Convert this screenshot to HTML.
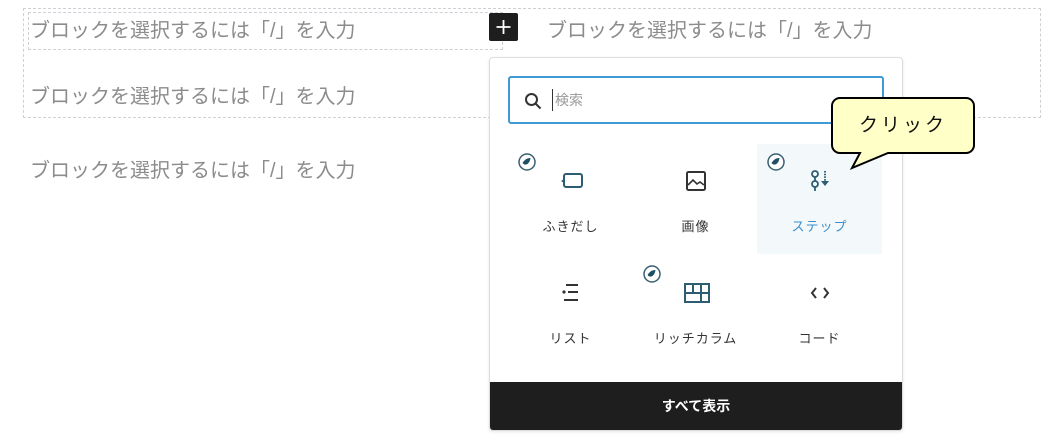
<!DOCTYPE html>
<html><head><meta charset="utf-8"><style>
*{box-sizing:border-box;margin:0;padding:0}
body{width:1054px;height:446px;background:#fff;position:relative;overflow:hidden;font-family:"Liberation Sans","Noto Sans CJK JP",sans-serif}
.ph{position:absolute;font-size:20px;color:#8c8c8c;line-height:24px;white-space:nowrap}
.dash{position:absolute;border:1px dashed #cfcfd6}
.plus{position:absolute;left:489px;top:13px;width:29px;height:28px;background:#1e1e1e;border-radius:2px}
.pop{position:absolute;left:489px;top:57px;width:414px;height:374px;border:1px solid #ddd;border-radius:4px;background:#fff;overflow:hidden;box-shadow:0 1px 3px rgba(0,0,0,.1)}
.search{position:absolute;left:18px;top:18px;width:376px;height:48px;border:2px solid #3f9ad6;border-radius:3px}
.cell{position:absolute;width:125px;height:110px;text-align:center}
.cell .lbl{position:absolute;left:0;right:0;top:72px;font-size:13px;color:#333;letter-spacing:1px}
.cell svg.ic{position:absolute;left:50px;top:24px}
.badge{position:absolute}
.foot{position:absolute;left:0;right:0;bottom:0;height:48px;background:#1e1e1e;color:#fff;text-align:center;line-height:48px;font-size:14px;font-weight:bold}
</style></head><body>
<div class="dash" style="left:23px;top:8px;width:1018px;height:110px"></div>
<div class="dash" style="left:28px;top:12px;width:475px;height:38px;background:#fff"></div>
<div class="ph" style="left:30px;top:19px">ブロックを選択するには「/」を入力</div>
<div class="ph" style="left:547px;top:19px">ブロックを選択するには「/」を入力</div>
<div class="ph" style="left:30px;top:85px">ブロックを選択するには「/」を入力</div>
<div class="ph" style="left:30px;top:159px">ブロックを選択するには「/」を入力</div>
<div class="plus"><svg width="29" height="28"><path d="M14.5 7v14M7.5 14h14" stroke="#fff" stroke-width="1.8"/></svg></div>
<div class="pop">
 <div class="search">
  <svg style="position:absolute;left:14px;top:14px" width="18" height="18"><circle cx="7.5" cy="7.5" r="5.5" fill="none" stroke="#333" stroke-width="2"/><path d="M11.5 11.5l5 5" stroke="#333" stroke-width="2"/></svg>
  <div style="position:absolute;left:42px;top:11px;width:1px;height:22px;background:#333"></div>
  <div style="position:absolute;left:45px;top:12px;font-size:14px;color:#999">検索</div>
 </div>
 <div class="cell" style="left:18px;top:86px">
  <svg class="badge" style="left:10px;top:9px" width="18" height="18"><circle cx="9" cy="9" r="8" fill="#fff" stroke="#3a5f72" stroke-width="1.5"/><path d="M4.5 10c2 3 7 2 8-5c-4 0-6 2-8 5z" fill="#1f4f66"/></svg>
  <svg class="ic" width="26" height="26"><rect x="6" y="6" width="18" height="13" rx="2" fill="none" stroke="#2c5d73" stroke-width="2"/><path d="M6 11l-3 2 3 2z" fill="#2c5d73"/></svg>
  <div class="lbl">ふきだし</div></div>
 <div class="cell" style="left:143px;top:86px">
  <svg class="ic" width="26" height="26"><rect x="4" y="4" width="18" height="18" rx="1.5" fill="none" stroke="#333" stroke-width="2"/><path d="M5 17l5-5 4 4 3-2 4 3" fill="none" stroke="#333" stroke-width="1.6"/></svg>
  <div class="lbl">画像</div></div>
 <div class="cell" style="left:267px;top:86px;background:#f3f8fb;border-radius:2px">
  <svg class="badge" style="left:10px;top:9px" width="18" height="18"><circle cx="9" cy="9" r="8" fill="#fff" stroke="#3a5f72" stroke-width="1.5"/><path d="M4.5 10c2 3 7 2 8-5c-4 0-6 2-8 5z" fill="#1f4f66"/></svg>
  <svg class="ic" width="26" height="26"><circle cx="8" cy="6" r="3" fill="none" stroke="#2c5d73" stroke-width="1.8"/><circle cx="8" cy="16" r="3" fill="none" stroke="#2c5d73" stroke-width="1.8"/><path d="M8 9v4M8 19v4" stroke="#2c5d73" stroke-width="1.8"/><path d="M18 3v10" stroke="#2c5d73" stroke-width="2" stroke-dasharray="1.5 1.2"/><path d="M14 13h8l-4 5z" fill="#2c5d73"/></svg>
  <div class="lbl" style="color:#3a8fc9">ステップ</div></div>
 <div class="cell" style="left:18px;top:198px">
  <svg class="ic" width="26" height="26"><path d="M8 5h12M10 12h10M6 20h14" stroke="#333" stroke-width="2"/><circle cx="6" cy="12" r="1.6" fill="#333"/></svg>
  <div class="lbl">リスト</div></div>
 <div class="cell" style="left:143px;top:198px">
  <svg class="badge" style="left:10px;top:9px" width="18" height="18"><circle cx="9" cy="9" r="8" fill="#fff" stroke="#3a5f72" stroke-width="1.5"/><path d="M4.5 10c2 3 7 2 8-5c-4 0-6 2-8 5z" fill="#1f4f66"/></svg>
  <svg class="ic" width="28" height="26"><rect x="2" y="4" width="24" height="18" fill="none" stroke="#2c5d73" stroke-width="2"/><path d="M2 13h24M10 4v9M18 4v18" stroke="#2c5d73" stroke-width="2"/></svg>
  <div class="lbl">リッチカラム</div></div>
 <div class="cell" style="left:267px;top:198px">
  <svg class="ic" width="26" height="26"><path d="M9 8l-4 5 4 5M17 8l4 5-4 5" fill="none" stroke="#333" stroke-width="2"/></svg>
  <div class="lbl">コード</div></div>
 <div class="foot">すべて表示</div>
</div>
<svg style="position:absolute;left:830px;top:96px" width="148" height="78">
 <path d="M10 2h126a8 8 0 0 1 8 8v39a8 8 0 0 1-8 8H58L22 72l8-15h-20a8 8 0 0 1-8-8V10a8 8 0 0 1 8-8z" fill="#ffffc8" stroke="#000" stroke-width="2"/>
 <text x="29" y="35" font-size="19" letter-spacing="3" font-family="Liberation Sans,Noto Sans CJK JP,sans-serif" fill="#111">クリック</text>
</svg>
</body></html>
